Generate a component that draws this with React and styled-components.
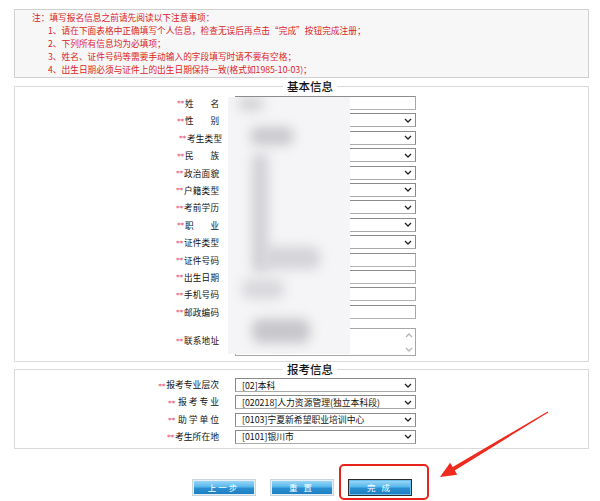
import React from 'react'
import styled, { createGlobalStyle } from 'styled-components'

const GlobalStyle = createGlobalStyle`
  html, body {
    margin: 0;
    padding: 0;
    background: #fff;
  }
  body {
    font-family: "Noto Sans CJK SC", "Noto Sans", sans-serif;
  }
`

const basicRows = [
    { label: '姓名', type: 'input' },
    { label: '性别', type: 'select' },
    { label: '考生类型', type: 'select', shift: true },
    { label: '民族', type: 'select' },
    { label: '政治面貌', type: 'select' },
    { label: '户籍类型', type: 'select' },
    { label: '考前学历', type: 'select' },
    { label: '职业', type: 'select' },
    { label: '证件类型', type: 'select' },
    { label: '证件号码', type: 'input' },
    { label: '出生日期', type: 'input' },
    { label: '手机号码', type: 'input' },
    { label: '邮政编码', type: 'input' },
]

const examRows = [
    { label: '报考专业层次', value: '[02]本科' },
    { label: ' 报 考 专 业', value: '[020218]人力资源管理(独立本科段)' },
    { label: ' 助 学 单 位', value: '[0103]宁夏新希望职业培训中心' },
    { label: '考生所在地', value: '[0101]银川市' },
]

// soft grey smudges of the blurred-out personal data
const blobs = [
    { x: 10, y: 0, w: 26, h: 14, c: '#d2d2d6' },
    { x: 22, y: 30, w: 44, h: 18, c: '#c9c9ce' },
    { x: 24, y: 56, w: 16, h: 120, c: '#d0d0d5' },
    { x: 34, y: 150, w: 58, h: 22, c: '#d3d3d8' },
    { x: 14, y: 182, w: 42, h: 20, c: '#d8d8dc' },
    { x: 24, y: 222, w: 58, h: 24, c: '#c6c6cb' },
]

function Chevron({ up }) {
    return (
        <svg width="8" height="5" viewBox="0 0 8 5">
            <path
                d={up ? 'M1 4 L4 1 L7 4' : 'M1 1 L4 4 L7 1'}
                fill="none"
                stroke="currentColor"
                strokeWidth="1.3"
            />
        </svg>
    )
}

function App() {
    return (
        <Page>
            <GlobalStyle />
            <Notice>
                <NoticeLine>注：填写报名信息之前请先阅读以下注意事项：</NoticeLine>
                <NoticeLine $indent>1、请在下面表格中正确填写个人信息，检查无误后再点击“完成”按钮完成注册；</NoticeLine>
                <NoticeLine $indent>2、下列所有信息均为必填项；</NoticeLine>
                <NoticeLine $indent>3、姓名、证件号码等需要手动输入的字段填写时请不要有空格；</NoticeLine>
                <NoticeLine $indent>4、出生日期必须与证件上的出生日期保持一致(格式如1985-10-03)；</NoticeLine>
            </Notice>

            <Section $top={1}>
                <Legend>基本信息</Legend>
                <Rows $rows="repeat(13, 17.4px) 40px" $pt={1.3} $pb={1}>
                    {basicRows.map(row => (
                        <React.Fragment key={row.label}>
                            <Label $shift={row.shift}>
                                <Star>**</Star>
                                <Spread $w={row.label.length === 2 ? 34 : 35}>{row.label}</Spread>
                            </Label>
                            {row.type === 'input'
                                ? <TextInput type="text" />
                                : <SelectBox><span /><Chevron /></SelectBox>}
                        </React.Fragment>
                    ))}
                    <Label>
                        <Star>**</Star>
                        <Spread $w={35}>联系地址</Spread>
                    </Label>
                    <AreaBox>
                        <ScrollArrows>
                            <Chevron up />
                            <Chevron />
                        </ScrollArrows>
                    </AreaBox>
                    <Blurred>
                        {blobs.map((b, i) => (
                            <Blob key={i} style={{ left: b.x, top: b.y, width: b.w, height: b.h, background: b.c }} />
                        ))}
                    </Blurred>
                </Rows>
            </Section>

            <Section $top={0}>
                <Legend>报考信息</Legend>
                <Rows $rows="repeat(4, 17.3px)" $pt={0} $pb={2}>
                    {examRows.map(row => (
                        <React.Fragment key={row.value}>
                            <Label $wide>
                                <Star>**</Star>
                                {row.label}
                            </Label>
                            <SelectBox>
                                <span>{row.value}</span>
                                <Chevron />
                            </SelectBox>
                        </React.Fragment>
                    ))}
                </Rows>
            </Section>

            <Actions>
                <Button>上一步</Button>
                <Button>重 置</Button>
                <Button $active>完 成</Button>
            </Actions>

            <Highlight />
            <Arrow width="600" height="501" viewBox="0 0 600 501">
                <polygon
                    points="440,477 450.1,462.7 452.7,467 547.7,411.6 548.3,412.4 454.7,470.4 457.3,474.7"
                    fill="#ef2a1f"
                />
            </Arrow>
        </Page>
    )
}

export default App


const Page = styled.div`
    position: relative;
    width: 600px;
    height: 501px;
    padding: 9px 11px 0 14px;
    box-sizing: border-box;
    overflow: hidden;
`

const Notice = styled.div`
    height: 69px;
    box-sizing: border-box;
    border: 1px solid #d0d0d0;
    background: #f7f7f8;
    padding: 1px 0 0 17px;
    color: #dc1c24;
    font-size: 8.7px;
    line-height: 13px;
`

const NoticeLine = styled.div`
    padding-left: ${props => props.$indent ? '16px' : '0'};
    white-space: nowrap;
`

const Section = styled.fieldset`
    margin: ${props => props.$top}px 0 0;
    padding: 0;
    border: 1px solid #dadada;
    min-width: 0;
`

const Legend = styled.legend`
    margin-left: 268px;
    padding: 0 4px;
    font-size: 11.5px;
    line-height: 14px;
    font-weight: 500;
    color: #111;
`

const Rows = styled.div`
    position: relative;
    display: grid;
    grid-template-columns: 205px 181px;
    grid-template-rows: ${props => props.$rows};
    column-gap: 15px;
    align-items: center;
    padding: ${props => props.$pt}px 0 ${props => props.$pb}px;
`

const Label = styled.div`
    display: flex;
    align-items: center;
    justify-content: flex-end;
    font-size: ${props => props.$wide ? '8.8px' : '8.6px'};
    color: #111;
    white-space: pre;
    padding-right: 1px;
    margin-right: ${props => props.$shift ? '-3px' : '0'};
    line-height: 12px;
`

const Star = styled.span`
    color: #e5486e;
    font-family: "DejaVu Sans", sans-serif;
    font-size: 7.5px;
    line-height: 8px;
    letter-spacing: -0.3px;
    margin-right: 1px;
    padding-top: 3px;
`

const Spread = styled.span`
    display: inline-block;
    width: ${props => props.$w}px;
    text-align: justify;
    text-align-last: justify;
`

const TextInput = styled.input`
    box-sizing: border-box;
    width: 181px;
    height: 14px;
    margin: 0;
    border: 1px solid #8c8c8c;
    border-bottom-color: #b3b3b3;
    border-right-color: #a8a8a8;
    padding: 0 4px;
    font-size: 9px;
    background: #fff;
    outline: none;
`

const SelectBox = styled.div`
    box-sizing: border-box;
    width: 181px;
    height: 14px;
    border: 1px solid #8a8a8a;
    border-bottom-color: #a9a9a9;
    display: flex;
    align-items: center;
    justify-content: space-between;
    padding: 0 3px 0 6px;
    font-size: 8.8px;
    color: #111;
    background: #fff;
    white-space: nowrap;
    overflow: hidden;

    svg {
        color: #222;
        flex: none;
    }
`

const AreaBox = styled.div`
    box-sizing: border-box;
    width: 181px;
    height: 28px;
    margin-top: 3px;
    border: 1px solid #a6a6a6;
    background: #fff;
    display: flex;
    justify-content: flex-end;
`

const ScrollArrows = styled.div`
    display: flex;
    flex-direction: column;
    justify-content: space-between;
    padding: 4px 2px 3px 0;
    color: #b4b4b4;
`

const Blurred = styled.div`
    position: absolute;
    left: 213px;
    top: 4px;
    width: 122px;
    height: 257px;
    background: #f5f5f7;
    overflow: hidden;
`

const Blob = styled.div`
    position: absolute;
    border-radius: 8px;
    filter: blur(6px);
`

const Actions = styled.div`
    display: flex;
    justify-content: center;
    gap: 14px;
    margin-top: 30px;
`

const Button = styled.button`
    width: 64px;
    height: 17px;
    box-sizing: border-box;
    margin: 0;
    padding: 0;
    border: 1px solid ${props => props.$active ? '#2b2b2b' : '#c9d4db'};
    box-shadow: inset 0 0 0 1px ${props => props.$active ? '#6cc0ee' : '#e3eef5'};
    background: linear-gradient(#a3daf7, #52b6ec 48%, #2a90d2 52%, #1c7cc0);
    color: #fff;
    font-family: inherit;
    font-size: 8.5px;
    letter-spacing: 2px;
`

const Highlight = styled.div`
    position: absolute;
    left: 339px;
    top: 464px;
    width: 90px;
    height: 36px;
    box-sizing: border-box;
    border: 2px solid #e8231c;
    border-radius: 5px;
    pointer-events: none;
`

const Arrow = styled.svg`
    position: absolute;
    left: 0;
    top: 0;
    pointer-events: none;
`
